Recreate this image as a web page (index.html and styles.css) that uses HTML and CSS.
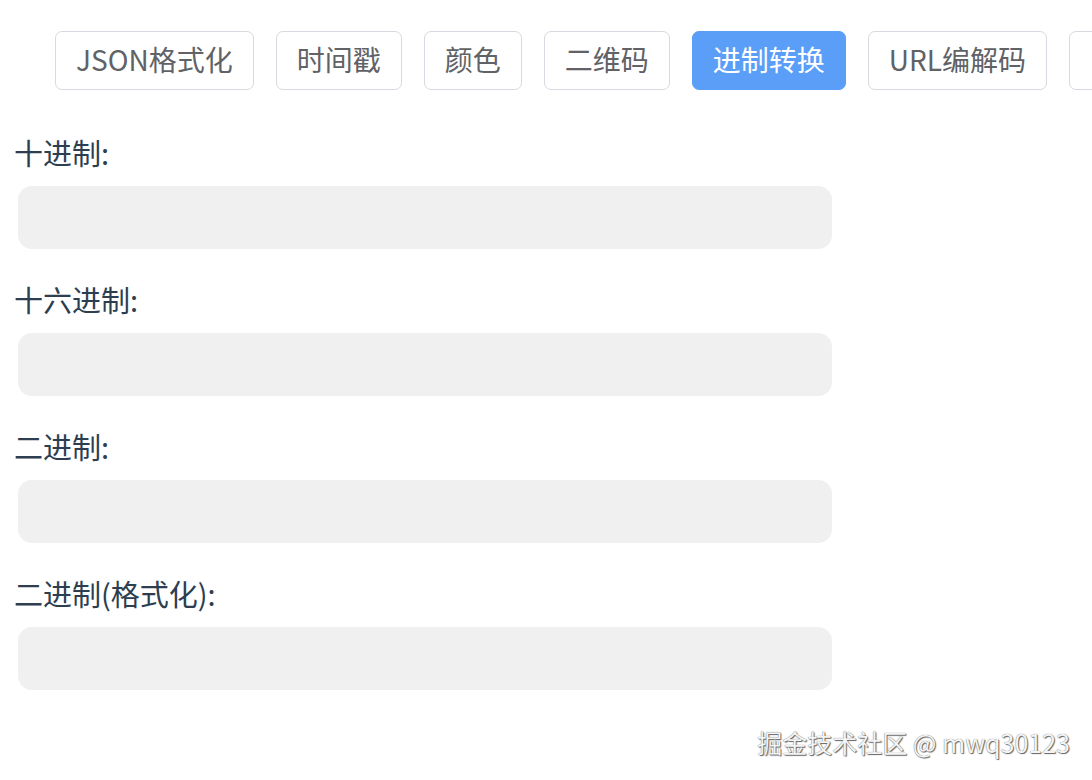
FILE: index.html
```html
<!DOCTYPE html>
<html lang="zh-CN">
<head>
<meta charset="utf-8">
<link rel="stylesheet" href="styles.css">
</head>
<body>
<div class="page">
  <nav class="tabs">
    <button class="tab">JSON格式化</button>
    <button class="tab">时间戳</button>
    <button class="tab">颜色</button>
    <button class="tab">二维码</button>
    <button class="tab active">进制转换</button>
    <button class="tab">URL编解码</button>
    <button class="tab">Base64</button>
  </nav>
  <main class="form">
    <div class="field">
      <label class="label">十进制:</label>
      <input class="input" type="text">
    </div>
    <div class="field">
      <label class="label">十六进制:</label>
      <input class="input" type="text">
    </div>
    <div class="field">
      <label class="label">二进制:</label>
      <input class="input" type="text">
    </div>
    <div class="field">
      <label class="label">二进制(格式化):</label>
      <input class="input" type="text">
    </div>
  </main>
  <div class="watermark">掘金技术社区 @ mwq30123</div>
</div>
</body>
</html>
```
FILE: styles.css
```css
html, body {
  margin: 0;
  padding: 0;
  background: #ffffff;
}
body {
  font-family: "Noto Sans CJK SC", "Noto Sans", sans-serif;
  width: 1092px;
  height: 780px;
  overflow: hidden;
}
.page {
  position: relative;
  width: 1092px;
  height: 780px;
}
.tabs {
  display: flex;
  gap: 22px;
  padding: 31px 0 0 55px;
  white-space: nowrap;
  overflow: hidden;
}
.tab {
  flex: none;
  height: 59px;
  padding: 0 20px 4px;
  border: 1px solid #d6d9df;
  border-radius: 7px;
  background: #ffffff;
  color: #606266;
  font-family: "Noto Sans CJK SC", "Noto Sans", sans-serif;
  font-size: 28px;
  line-height: 1;
}
.tab.active {
  background: #5a9ef8;
  border-color: #5a9ef8;
  color: #ffffff;
}
.form {
  display: flex;
  flex-direction: column;
  gap: 30px;
  padding-top: 42px;
}
.field {
  display: flex;
  flex-direction: column;
  gap: 14px;
}
.label {
  padding-left: 14px;
  height: 40px;
  line-height: 40px;
  font-size: 29px;
  color: #2c3e50;
}
.input {
  box-sizing: border-box;
  margin-left: 18px;
  width: 814px;
  height: 63px;
  border: none;
  border-radius: 14px;
  background: #f0f0f0;
  outline: none;
}
.watermark {
  position: absolute;
  right: 22px;
  bottom: 20px;
  font-size: 25px;
  color: #f4f4f4;
  text-shadow: 0 0 1px #555, 1px 1px 1px #666;
  white-space: nowrap;
}
```
